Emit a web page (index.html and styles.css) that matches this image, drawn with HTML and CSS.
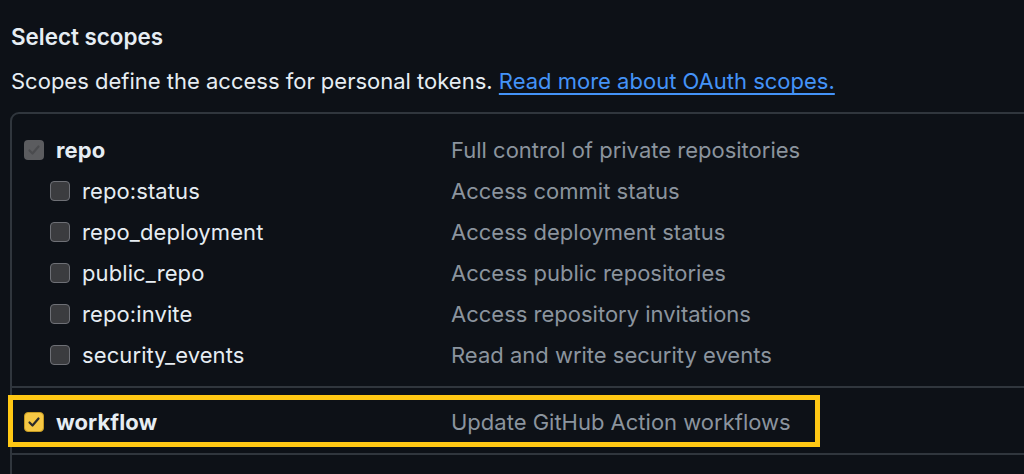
FILE: index.html
```html
<!DOCTYPE html>
<html lang="en">
<head>
<meta charset="utf-8">
<title>Select scopes</title>
<link rel="stylesheet" href="styles.css">
</head>
<body>
<div class="page">
  <h2 class="title">Select scopes</h2>
  <p class="lead">Scopes define the access for personal tokens. <a href="#" class="link">Read more about OAuth scopes.</a></p>
  <div class="scopes">
    <div class="group first">
      <div class="row parent">
        <span class="check disabled"><svg viewBox="0 0 16 16"><path d="M3.5 8.5l3 3 6-7" /></svg></span>
        <span class="name">repo</span>
        <span class="desc">Full control of private repositories</span>
      </div>
      <div class="row child">
        <span class="check"></span>
        <span class="name">repo:status</span>
        <span class="desc">Access commit status</span>
      </div>
      <div class="row child">
        <span class="check"></span>
        <span class="name">repo_deployment</span>
        <span class="desc">Access deployment status</span>
      </div>
      <div class="row child">
        <span class="check"></span>
        <span class="name">public_repo</span>
        <span class="desc">Access public repositories</span>
      </div>
      <div class="row child">
        <span class="check"></span>
        <span class="name">repo:invite</span>
        <span class="desc">Access repository invitations</span>
      </div>
      <div class="row child">
        <span class="check"></span>
        <span class="name">security_events</span>
        <span class="desc">Read and write security events</span>
      </div>
    </div>
    <div class="group second">
      <div class="row parent highlighted">
        <span class="check checked"><svg viewBox="0 0 16 16"><path d="M3.5 8.5l3 3 6-7" /></svg></span>
        <span class="name">workflow</span>
        <span class="desc">Update GitHub Action workflows</span>
        <span class="mark"></span>
      </div>
    </div>
    <div class="group third"></div>
  </div>
</div>
</body>
</html>
```

FILE: styles.css
```css
html, body {
  margin: 0;
  padding: 0;
  background: #0d1117;
  overflow: hidden;
}

body {
  width: 1024px;
  height: 474px;
  font-family: Inter, "Noto Sans", "Liberation Sans", sans-serif;
  color: #e6edf3;
}

.page {
  width: 1024px;
  height: 474px;
  overflow: hidden;
  box-sizing: border-box;
  padding: 22px 0 0 11px;
}

.title {
  margin: 0;
  font-size: 22.4px;
  line-height: 30px;
  font-weight: 600;
  color: #e6edf3;
}

.lead {
  margin: 14px 0 16px;
  font-size: 22px;
  line-height: 30px;
  color: #e6edf3;
}

.link {
  color: #4493f8;
  text-decoration: underline;
  text-underline-offset: 4px;
  text-decoration-thickness: 2px;
}

.scopes {
  width: 1100px;
  height: 400px;
  margin-left: -1px;
  border: 2px solid #30363d;
  border-radius: 9px;
}

.group {
  display: flex;
  flex-direction: column;
}

.group.first {
  padding: 15px 0 11px;
}

.group.second {
  padding: 13px 0 11px;
  border-top: 2px solid #30363d;
}

.group.third {
  border-top: 2px solid #30363d;
}

.row {
  position: relative;
  display: grid;
  align-items: center;
  height: 41px;
  font-size: 22px;
}

.row.parent {
  padding-left: 12px;
  grid-template-columns: 20px 407px 1fr;
}

.row.child {
  padding-left: 38px;
  grid-template-columns: 20px 381px 1fr;
}

.name {
  padding-left: 12px;
  color: #e6edf3;
  letter-spacing: 0.1px;
}

.check {
  box-sizing: border-box;
  width: 20px;
  height: 20px;
  border-radius: 4px;
  border: 1.5px solid #6e7076;
  background: #3b3c3f;
  display: flex;
  align-items: center;
  justify-content: center;
}

.check svg {
  width: 16px;
  height: 16px;
  fill: none;
  stroke-width: 2.2px;
  stroke-linecap: round;
  stroke-linejoin: round;
}

.check.disabled {
  border: none;
  background: #5b5c5f;
}

.check.disabled svg {
  stroke: #4a4b4e;
}

.check.checked {
  border: 1px solid #c49a22;
  background: #f6c844;
}

.check.checked svg {
  stroke: #2b2b2b;
}

.parent .name {
  font-weight: 700;
}

.desc {
  color: #8b949e;
}

.mark {
  position: absolute;
  left: -4px;
  top: -6px;
  width: 812px;
  height: 52px;
  box-sizing: border-box;
  border: 5px solid #ffc814;
  pointer-events: none;
}
```
